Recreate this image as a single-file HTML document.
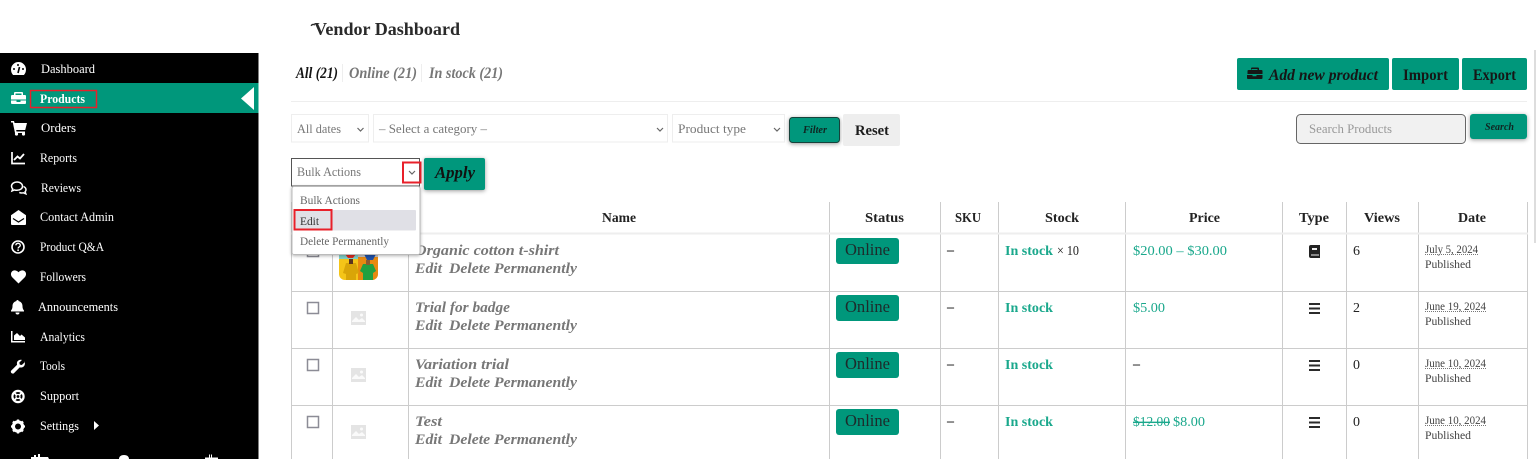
<!DOCTYPE html>
<html lang="en"><head><meta charset="utf-8"><title>Vendor Dashboard</title>
<style>
html,body{margin:0;padding:0;background:#fff;width:1536px;height:459px;overflow:hidden}
svg{display:block;position:absolute;left:0;top:0}
text{font-family:"Liberation Serif",serif;white-space:pre}
.m{font-size:13px;fill:#fff}
.i{fill:#fff}
.h{font-size:14px;font-weight:bold;fill:#222;text-anchor:start}
.n{font-size:15px;font-weight:bold;font-style:italic;fill:#777}
.o{font-size:17px;fill:#1d2b2b}
.s{font-size:14px;font-weight:bold;fill:#1aa88c}
.p{font-size:14px;fill:#1aa88c}
.d{font-size:12px;fill:#444}
.f{font-size:13px;fill:#777}
.b{font-size:16px;fill:#161616;font-weight:bold;font-style:italic}
.l{fill:none;stroke:#ccc;stroke-width:1}
.dot{stroke:#777;stroke-width:1;stroke-dasharray:1 1;fill:none}
</style></head><body>
<svg width="1536" height="459" viewBox="0 0 1536 459" xmlns="http://www.w3.org/2000/svg">
<defs>
<filter id="sh" x="-30%" y="-30%" width="160%" height="170%"><feDropShadow dx="0" dy="1" stdDeviation="2" flood-color="#000" flood-opacity=".4"/></filter>
<filter id="sd" x="-10%" y="-10%" width="120%" height="120%"><feDropShadow dx="0" dy="1" stdDeviation="1.5" flood-color="#000" flood-opacity=".3"/></filter>
<g id="ph"><path fill="#e4e4e4" d="M0 0h15v14H0z"/><path fill="#fafafa" d="M1 10l4-4 3 3 3-2 3 3v1H1z"/><circle cx="10.500" cy="4" r="1.500" fill="#fafafa"/></g>
<g id="bg"><path fill="#2b2b2b" d="M0 0h11v2H0zM0 4.500h11v2H0zM0 9h11v2H0z"/></g>
<path id="chk" d="M0.500 0.500h11v11h-11z" fill="#fff" stroke="#8c8c96" stroke-width="1.500"/>
</defs>

<!-- sidebar -->
<rect x="0" y="53" width="258.500" height="406" fill="#000"/>
<rect x="0" y="83" width="258.500" height="30" fill="#00977b"/>
<path d="M254 87v23l-13-11.500z" fill="#fff"/>
<rect x="30.500" y="90.500" width="66" height="17" fill="none" stroke="#e8202a" stroke-width="1.500"/>

<text class="m" x="41" y="73" textLength="54" lengthAdjust="spacingAndGlyphs">Dashboard</text>
<text class="m" x="40" y="103" textLength="45" lengthAdjust="spacingAndGlyphs" font-weight="bold">Products</text>
<text class="m" x="41" y="132" textLength="35" lengthAdjust="spacingAndGlyphs">Orders</text>
<text class="m" x="40" y="162" textLength="37" lengthAdjust="spacingAndGlyphs">Reports</text>
<text class="m" x="41" y="192" textLength="40" lengthAdjust="spacingAndGlyphs">Reviews</text>
<text class="m" x="40" y="221" textLength="74" lengthAdjust="spacingAndGlyphs">Contact Admin</text>
<text class="m" x="40" y="251" textLength="64" lengthAdjust="spacingAndGlyphs">Product Q&amp;A</text>
<text class="m" x="40" y="281" textLength="46" lengthAdjust="spacingAndGlyphs">Followers</text>
<text class="m" x="38" y="311" textLength="80" lengthAdjust="spacingAndGlyphs">Announcements</text>
<text class="m" x="40" y="341" textLength="45" lengthAdjust="spacingAndGlyphs">Analytics</text>
<text class="m" x="40" y="370" textLength="25" lengthAdjust="spacingAndGlyphs">Tools</text>
<text class="m" x="40" y="400" textLength="39" lengthAdjust="spacingAndGlyphs">Support</text>
<text class="m" x="40" y="430" textLength="39" lengthAdjust="spacingAndGlyphs">Settings</text>
<path d="M94 421l5 4.500-5 4.500z" fill="#fff"/>

<!-- sidebar icons -->
<path class="i" d="M18.500 62a7.500 7.500 0 0 0-7.500 7.500c0 2.200.8 4.200 2.100 5.500h10.800c1.300-1.300 2.100-3.300 2.100-5.500a7.500 7.500 0 0 0-7.500-7.500z"/>
<path d="M18 73l1.500-6" stroke="#000" stroke-width="1.600"/><circle cx="14" cy="69" r="1" fill="#000"/><circle cx="18" cy="65" r="1" fill="#000"/><circle cx="23" cy="69" r="1" fill="#000"/>
<path class="i" fill-rule="evenodd" d="M15 92h7a1 1 0 0 1 1 1v2h2a1 1 0 0 1 1 1v3.500H11V96a1 1 0 0 1 1-1h2v-2a1 1 0 0 1 1-1zm.5 1.500V95h6v-1.500z"/>
<path class="i" d="M11 100.500h5.500v1.500h4v-1.500H26v2.500a1 1 0 0 1-1 1H12a1 1 0 0 1-1-1z"/>
<path class="i" d="M11 121h3l.6 2H27l-1.800 7H16.200l.3 1.500H25v1.500H15l-2.200-10.500H11z"/><circle cx="16.500" cy="134" r="1.600" class="i"/><circle cx="23.500" cy="134" r="1.600" class="i"/>
<path d="M12 152v11.500h13" fill="none" stroke="#fff" stroke-width="1.700"/><path d="M14 160l3.500-3.500 2.500 2 4-4.500" fill="none" stroke="#fff" stroke-width="1.800"/>
<path d="M17 182c-3.300 0-5.500 1.900-5.500 4.200 0 1 .4 1.900 1.200 2.700l-.7 2 2.500-1c.8.300 1.600.4 2.500.4 3.300 0 5.500-1.900 5.500-4.100S20.300 182 17 182z" fill="none" stroke="#fff" stroke-width="1.500"/><path d="M23.500 186.500c1.500.7 2.500 1.900 2.500 3.200 0 .8-.3 1.500-.9 2.100l.7 2-2.500-1c-1.300.3-2.800.2-4-.4" fill="none" stroke="#fff" stroke-width="1.500"/>
<path class="i" d="M18.500 210l7.500 5.300V224a1 1 0 0 1-1 1H12a1 1 0 0 1-1-1v-8.700z"/><path d="M13 218.500l5.500 3.500 5.500-3.500" fill="none" stroke="#000" stroke-width="1.200"/>
<circle cx="18" cy="247" r="6" fill="none" stroke="#fff" stroke-width="1.600"/><path d="M15.800 245.300c.2-1.300 1.100-2 2.300-2 1.300 0 2.200.8 2.200 1.900 0 1.700-2.200 1.700-2.200 3.300" fill="none" stroke="#fff" stroke-width="1.300"/><circle cx="18.100" cy="250.200" r=".9" class="i"/>
<path class="i" d="M18.500 283.500l-6.300-6.300c-1.700-1.800-1.600-4.400 0-5.900 1.600-1.400 4.300-1.300 6.300 1 2-2.300 4.700-2.400 6.300-1 1.600 1.500 1.700 4.100 0 5.900z"/>
<path class="i" d="M17.500 300c.7 0 1.200.5 1.200 1.100 2.300.5 3.800 2.400 3.800 5 0 2.700 1 3.700 1.500 4.400v1H11v-1c.5-.7 1.500-1.700 1.500-4.400 0-2.600 1.500-4.500 3.800-5 0-.6.500-1.100 1.200-1.100zM15.500 312.500h4a2 2 0 0 1-4 0z"/>
<path class="i" d="M11 331h1.500v10H25v1.500H11zM14 340v-4.500l3-2.500 3 3 1.500-1.500 3.500 3V340z"/>
<path class="i" d="M24.500 362.500l-2.700 2.500-2-.4-.5-2 2.600-2.600c-2.300-.8-5 .9-5 3.400 0 .6.100 1 .2 1.400l-5.900 5.800c-1 1 .1 3.300 2.100 3l.6-.3 5.800-5.900c3 .7 5.300-1.400 5.200-4.200 0-.8-.2-1.500-.4-2.200z"/>
<circle cx="18" cy="396.500" r="5.600" fill="none" stroke="#fff" stroke-width="2.200"/><circle cx="18" cy="396.500" r="2" fill="none" stroke="#fff" stroke-width="1.200"/><path d="M14 392.500l2.500 2.500M22 392.500l-2.500 2.500M14 400.500l2.500-2.500M22 400.500l-2.500-2.500" stroke="#fff" stroke-width="1.800"/>
<circle cx="18" cy="426.500" r="4.600" fill="none" stroke="#fff" stroke-width="3.200"/><path d="M18 419.500v14M11 426.500h14M13 421.500l10 10M23 421.500l-10 10" stroke="#fff" stroke-width="2.300" stroke-dasharray="2.400 9.200"/>
<path class="i" d="M31 459v-2h3v-2h2v2h2v-3h2v3h8l1 2zM119 459c0-2.500 2-4 5-4s5 1.500 5 4zM205 459v-1.500h4v-3h1v3h1v-3h1v3h6v1.500z"/>

<!-- header -->
<path d="M310.500 25.500c1-2 2.800-2.300 5-1l-1 1c-1.300-.7-2-.5-2.800.6z" fill="#2a2a2a"/>
<text x="314" y="35" font-size="18" font-weight="bold" fill="#2a2a2a" textLength="146" lengthAdjust="spacingAndGlyphs">Vendor Dashboard</text>
<text x="296" y="78" font-size="16" font-weight="bold" font-style="italic" fill="#151515" textLength="42" lengthAdjust="spacingAndGlyphs">All (21)</text>
<text x="349" y="78" font-size="16" font-weight="bold" font-style="italic" fill="#777" textLength="68" lengthAdjust="spacingAndGlyphs">Online (21)</text>
<text x="429" y="78" font-size="16" font-weight="bold" font-style="italic" fill="#777" textLength="74" lengthAdjust="spacingAndGlyphs">In stock (21)</text>
<path d="M342.500 64v18M421.500 64v18" stroke="#eee"/>
<path d="M291 101.500h1236" stroke="#eee"/>

<!-- top right buttons -->
<rect x="1237" y="58" width="152" height="32" rx="2" fill="#00977b"/>
<rect x="1392" y="58" width="67" height="32" rx="2" fill="#00977b"/>
<rect x="1462" y="58" width="65" height="32" rx="2" fill="#00977b"/>
<path fill="#161616" fill-rule="evenodd" d="M1251 67.500h7a1 1 0 0 1 1 1V70h2.500a1 1 0 0 1 1 1v3h-15v-3a1 1 0 0 1 1-1h2.500v-1.500a1 1 0 0 1 1-1zm.5 1.500v1h6v-1z"/>
<path fill="#161616" d="M1247 75h5.500v1.200h4V75h6v3a1 1 0 0 1-1 1h-13.500a1 1 0 0 1-1-1z"/>
<text class="b" x="1269" y="80" textLength="109" lengthAdjust="spacingAndGlyphs">Add new product</text>
<text x="1403" y="80" font-size="16" font-weight="bold" fill="#161616" textLength="45" lengthAdjust="spacingAndGlyphs">Import</text>
<text x="1473" y="80" font-size="16" font-weight="bold" fill="#161616" textLength="43" lengthAdjust="spacingAndGlyphs">Export</text>

<!-- filters -->
<rect x="291.500" y="114.500" width="77" height="27.500" fill="#fff" stroke="#eee"/>
<text class="f" x="297" y="133" textLength="44" lengthAdjust="spacingAndGlyphs">All dates</text>
<path d="M357.500 128l3 3 3-3" fill="none" stroke="#666" stroke-width="1.200"/>
<rect x="373.500" y="114.500" width="294" height="27.500" fill="#fff" stroke="#eee"/>
<text class="f" x="379" y="133" textLength="108" lengthAdjust="spacingAndGlyphs">– Select a category –</text>
<path d="M657 128l3 3 3-3" fill="none" stroke="#666" stroke-width="1.200"/>
<rect x="672.500" y="114.500" width="112" height="27.500" fill="#fff" stroke="#eee"/>
<text class="f" x="678" y="133" textLength="68" lengthAdjust="spacingAndGlyphs">Product type</text>
<path d="M774 128l3 3 3-3" fill="none" stroke="#666" stroke-width="1.200"/>
<rect x="789.500" y="117.500" width="50" height="25" rx="3" fill="#00977b" stroke="#15433a" filter="url(#sh)"/>
<text x="803" y="133" font-size="10" font-weight="bold" font-style="italic" fill="#0f2622" textLength="24" lengthAdjust="spacingAndGlyphs">Filter</text>
<rect x="843" y="114" width="57" height="32" rx="2" fill="#eee"/>
<text x="855" y="135" font-size="15" font-weight="bold" fill="#1c1c1c" textLength="34" lengthAdjust="spacingAndGlyphs">Reset</text>
<rect x="1296.500" y="114.500" width="169" height="29" rx="4" fill="#f1f1f1" stroke="#666"/>
<text x="1309" y="133" font-size="13" fill="#999" textLength="83" lengthAdjust="spacingAndGlyphs">Search Products</text>
<rect x="1470" y="114" width="57" height="25" rx="3" fill="#00977b" filter="url(#sh)"/>
<text x="1485" y="130" font-size="10" font-weight="bold" font-style="italic" fill="#0f2622" textLength="29" lengthAdjust="spacingAndGlyphs">Search</text>

<!-- table -->
<path class="l" d="M291.500 202v257M332.500 202v257M408.500 202v257M829.500 202v257M940.500 202v257M998.500 202v257M1125.500 202v257M1282.500 202v257M1346.500 202v257M1418.500 202v257M1527.500 202v257"/>
<path d="M291 233.500h1237" stroke="#eee" stroke-width="2"/>
<path class="l" d="M291 291.500h1237M291 348.500h1237M291 405.500h1237"/>
<text class="h" x="602" y="222" textLength="34" lengthAdjust="spacingAndGlyphs">Name</text>
<text class="h" x="865" y="222" textLength="39" lengthAdjust="spacingAndGlyphs">Status</text>
<text class="h" x="955" y="222" textLength="26" lengthAdjust="spacingAndGlyphs">SKU</text>
<text class="h" x="1045" y="222" textLength="34" lengthAdjust="spacingAndGlyphs">Stock</text>
<text class="h" x="1189" y="222" textLength="31" lengthAdjust="spacingAndGlyphs">Price</text>
<text class="h" x="1299" y="222" textLength="30" lengthAdjust="spacingAndGlyphs">Type</text>
<text class="h" x="1364" y="222" textLength="36" lengthAdjust="spacingAndGlyphs">Views</text>
<text class="h" x="1458" y="222" textLength="28" lengthAdjust="spacingAndGlyphs">Date</text>

<!-- row 1 -->
<use href="#chk" x="307" y="245"/>
<g>
<path d="M339 254h39v20a6 6 0 0 1-6 6h-27a6 6 0 0 1-6-6z" fill="#f5c518"/>
<path d="M339 254h19v5h-19z" fill="#7fd0c8"/><path d="M358 254h20v20a6 6 0 0 1-6 6h-14z" fill="#e88a10"/><path d="M358 254h20v3h-20z" fill="#c8c8c8"/>
<path d="M345 254h11l-3 4h-5z" fill="#e02a20"/><path d="M364 254h12l-3 6h-6z" fill="#1e50a8"/>
<path d="M346 263h10l3 10-3 1v6h-10v-6l-3-1z" fill="#d9a508"/><rect x="349" y="259" width="4" height="5" fill="#5a3420"/>
<path d="M363 264h10l3 7-3 2v7h-10v-7l-3-2z" fill="#22a040"/><rect x="366" y="260" width="4" height="5" fill="#8a5a30"/>
</g>
<text class="n" x="415" y="255" textLength="144" lengthAdjust="spacingAndGlyphs">Organic cotton t-shirt</text>
<text class="n" x="415" y="273" textLength="27" lengthAdjust="spacingAndGlyphs">Edit</text>
<text class="n" x="449" y="273" textLength="128" lengthAdjust="spacingAndGlyphs">Delete Permanently</text>
<rect x="836" y="238" width="63" height="26" rx="3" fill="#00977b"/>
<text class="o" x="845" y="255" textLength="45" lengthAdjust="spacingAndGlyphs">Online</text>
<text x="947" y="254" font-size="14" fill="#222" font-weight="bold">–</text>
<text class="s" x="1005" y="255" textLength="48" lengthAdjust="spacingAndGlyphs">In stock</text>
<text x="1057" y="255" font-size="14" fill="#222" textLength="22" lengthAdjust="spacingAndGlyphs">× 10</text>
<text class="p" x="1133" y="255" textLength="94" lengthAdjust="spacingAndGlyphs">$20.00 – $30.00</text>
<path d="M1309 247a2 2 0 0 1 2-2h9v13h-9a2 2 0 0 1-2-2z" fill="#222"/><path d="M1312 248h5v2h-5zM1311 254.500h8v1h-8z" fill="#eee"/>
<text x="1353" y="255" font-size="14" fill="#222">6</text>
<text class="d" x="1425" y="253" textLength="53" lengthAdjust="spacingAndGlyphs">July 5, 2024</text><path class="dot" d="M1425 254.500h53"/>
<text class="d" x="1425" y="268" textLength="46" lengthAdjust="spacingAndGlyphs">Published</text>

<!-- row 2 -->
<use href="#chk" x="307" y="302"/>
<use href="#ph" x="351" y="311"/>
<text class="n" x="415" y="312" textLength="95" lengthAdjust="spacingAndGlyphs">Trial for badge</text>
<text class="n" x="415" y="330" textLength="27" lengthAdjust="spacingAndGlyphs">Edit</text>
<text class="n" x="449" y="330" textLength="128" lengthAdjust="spacingAndGlyphs">Delete Permanently</text>
<rect x="836" y="295" width="63" height="26" rx="3" fill="#00977b"/>
<text class="o" x="845" y="312" textLength="45" lengthAdjust="spacingAndGlyphs">Online</text>
<text x="947" y="311" font-size="14" fill="#222" font-weight="bold">–</text>
<text class="s" x="1005" y="312" textLength="48" lengthAdjust="spacingAndGlyphs">In stock</text>
<text class="p" x="1133" y="312" textLength="32" lengthAdjust="spacingAndGlyphs">$5.00</text>
<use href="#bg" x="1309" y="303"/>
<text x="1353" y="312" font-size="14" fill="#222">2</text>
<text class="d" x="1425" y="310" textLength="61" lengthAdjust="spacingAndGlyphs">June 19, 2024</text><path class="dot" d="M1425 311.500h61"/>
<text class="d" x="1425" y="325" textLength="46" lengthAdjust="spacingAndGlyphs">Published</text>

<!-- row 3 -->
<use href="#chk" x="307" y="359"/>
<use href="#ph" x="351" y="368"/>
<text class="n" x="415" y="369" textLength="94" lengthAdjust="spacingAndGlyphs">Variation trial</text>
<text class="n" x="415" y="387" textLength="27" lengthAdjust="spacingAndGlyphs">Edit</text>
<text class="n" x="449" y="387" textLength="128" lengthAdjust="spacingAndGlyphs">Delete Permanently</text>
<rect x="836" y="352" width="63" height="26" rx="3" fill="#00977b"/>
<text class="o" x="845" y="369" textLength="45" lengthAdjust="spacingAndGlyphs">Online</text>
<text x="947" y="368" font-size="14" fill="#222" font-weight="bold">–</text>
<text class="s" x="1005" y="369" textLength="48" lengthAdjust="spacingAndGlyphs">In stock</text>
<text x="1133" y="368" font-size="14" fill="#222" font-weight="bold">–</text>
<use href="#bg" x="1309" y="360"/>
<text x="1353" y="369" font-size="14" fill="#222">0</text>
<text class="d" x="1425" y="367" textLength="61" lengthAdjust="spacingAndGlyphs">June 10, 2024</text><path class="dot" d="M1425 368.500h61"/>
<text class="d" x="1425" y="382" textLength="46" lengthAdjust="spacingAndGlyphs">Published</text>

<!-- row 4 -->
<use href="#chk" x="307" y="416"/>
<use href="#ph" x="351" y="425"/>
<text class="n" x="415" y="426" textLength="27" lengthAdjust="spacingAndGlyphs">Test</text>
<text class="n" x="415" y="444" textLength="27" lengthAdjust="spacingAndGlyphs">Edit</text>
<text class="n" x="449" y="444" textLength="128" lengthAdjust="spacingAndGlyphs">Delete Permanently</text>
<rect x="836" y="409" width="63" height="26" rx="3" fill="#00977b"/>
<text class="o" x="845" y="426" textLength="45" lengthAdjust="spacingAndGlyphs">Online</text>
<text x="947" y="425" font-size="14" fill="#222" font-weight="bold">–</text>
<text class="s" x="1005" y="426" textLength="48" lengthAdjust="spacingAndGlyphs">In stock</text>
<text class="p" x="1133" y="426" textLength="37" lengthAdjust="spacingAndGlyphs" text-decoration="line-through">$12.00</text>
<text class="p" x="1173" y="426" textLength="32" lengthAdjust="spacingAndGlyphs">$8.00</text>
<use href="#bg" x="1309" y="417"/>
<text x="1353" y="426" font-size="14" fill="#222">0</text>
<text class="d" x="1425" y="424" textLength="61" lengthAdjust="spacingAndGlyphs">June 10, 2024</text><path class="dot" d="M1425 425.500h61"/>
<text class="d" x="1425" y="439" textLength="46" lengthAdjust="spacingAndGlyphs">Published</text>

<!-- bulk actions -->
<rect x="291.500" y="158.500" width="128" height="27.500" fill="#fff" stroke="#555"/>
<text class="f" x="297" y="176" textLength="64" lengthAdjust="spacingAndGlyphs">Bulk Actions</text>
<path d="M409 171l3 3 3-3" fill="none" stroke="#666" stroke-width="1.200"/>
<rect x="403" y="162.500" width="17.500" height="20" fill="none" stroke="#e8202a" stroke-width="2"/>
<rect x="424" y="158" width="61" height="32" rx="2" fill="#00977b" filter="url(#sh)"/>
<text x="435" y="178" font-size="17" font-weight="bold" font-style="italic" fill="#111" textLength="40" lengthAdjust="spacingAndGlyphs">Apply</text>

<rect x="292" y="186.500" width="128" height="68" rx="2" fill="#fff" stroke="#bbb" filter="url(#sd)"/>
<text x="300" y="204" font-size="12" fill="#666" textLength="60" lengthAdjust="spacingAndGlyphs">Bulk Actions</text>
<rect x="295" y="210" width="121" height="20.500" rx="1" fill="#e0e0e6"/>
<text x="300" y="225" font-size="12" fill="#333" textLength="19" lengthAdjust="spacingAndGlyphs">Edit</text>
<rect x="294.500" y="210" width="37" height="19.500" fill="none" stroke="#e8202a" stroke-width="2"/>
<text x="300" y="245" font-size="12" fill="#666" textLength="89" lengthAdjust="spacingAndGlyphs">Delete Permanently</text>

<rect x="1534" y="50" width="2" height="193" fill="#ddd"/>
</svg>
</body></html>
